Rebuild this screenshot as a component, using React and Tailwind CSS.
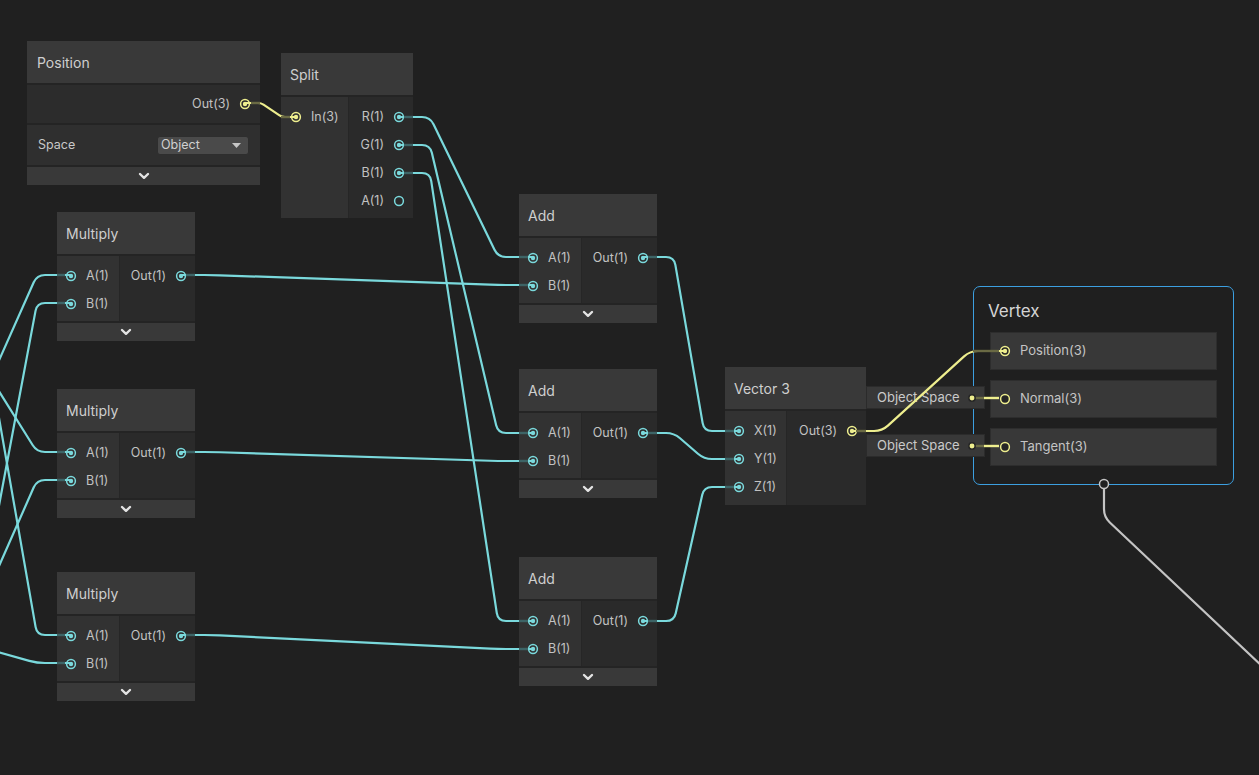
import React from "react";

const CY = "#7ad9dc";
const CY_DIM = "#3d6466";
const YE = "#eeee8e";
const YE_DIM = "#6a6a44";

// polyline with rounded corners
const rounded = (pts, r) => {
  let d = `M${pts[0][0]},${pts[0][1]}`;
  for (let i = 1; i < pts.length - 1; i++) {
    const [px, py] = pts[i - 1];
    const [cx, cy] = pts[i];
    const [nx, ny] = pts[i + 1];
    const l1 = Math.hypot(cx - px, cy - py);
    const l2 = Math.hypot(nx - cx, ny - cy);
    const r1 = Math.min(r, l1 / 2);
    const r2 = Math.min(r, l2 / 2);
    const ax = cx - ((cx - px) / l1) * r1;
    const ay = cy - ((cy - py) / l1) * r1;
    const bx = cx + ((nx - cx) / l2) * r2;
    const by = cy + ((ny - cy) / l2) * r2;
    d += ` L${ax},${ay} Q${cx},${cy} ${bx},${by}`;
  }
  const last = pts[pts.length - 1];
  return d + ` L${last[0]},${last[1]}`;
};

const edge = (o, i, oe, ie, c = "cy") => ({
  pts: [o, [o[0] + 31, o[1]], [i[0] - 35, i[1]], i],
  oe,
  ie,
  c,
});

const wires = [
  // split -> add
  edge([399, 117], [533, 257], 413, 519),
  edge([399, 145], [533, 433], 413, 519),
  edge([399, 173], [533, 621], 413, 519),
  // multiply -> add
  edge([181, 275], [533, 285], 195, 519),
  edge([181, 452], [533, 461], 195, 519),
  edge([181, 635], [533, 649], 195, 519),
  // add -> vector3
  edge([643, 257], [739, 431], 657, 725),
  edge([643, 433], [739, 459], 657, 725),
  edge([643, 621], [739, 487], 657, 725),
  // from offscreen into multiply inputs
  { pts: [[-20, 403], [37, 275], [70, 275]], ie: 57, c: "cy" },
  { pts: [[-5, 527], [37, 303], [70, 303]], ie: 57, c: "cy" },
  { pts: [[-20, 361], [37, 452], [70, 452]], ie: 57, c: "cy" },
  { pts: [[-20, 609], [37, 480], [70, 480]], ie: 57, c: "cy" },
  { pts: [[-5, 395], [37, 635], [70, 635]], ie: 57, c: "cy" },
  { pts: [[-20, 647], [37, 663], [70, 663]], ie: 57, c: "cy" },
  // yellow
  { pts: [[246, 103], [261, 103], [282, 117], [295, 117]], oe: 260, ie: 281, c: "ye", r: 3 },
  { pts: [[851, 431], [882, 431], [970, 351], [1004, 351]], oe: 866, ie: 973, c: "ye" },
];

const Port = ({ c = CY, dot = true, hollowFill = "none" }) => (
  <svg width="12" height="12" viewBox="0 0 12 12" className="shrink-0">
    <circle cx="6" cy="6" r="4.4" fill={hollowFill} stroke={c} strokeWidth="1.5" />
    {dot && <circle cx="6" cy="6" r="2.2" fill={c} />}
  </svg>
);

const Chevron = () => (
  <svg width="12" height="8" viewBox="0 0 12 8">
    <path d="M2 2 L6 5.8 L10 2" fill="none" stroke="#e4e4e4" strokeWidth="2.4" strokeLinecap="round" strokeLinejoin="round" />
  </svg>
);

const InRow = ({ label, dot = true }) => (
  <div className="h-[28px] flex items-center gap-[9px] pl-[8px]">
    <Port dot={dot} />
    <span>{label}</span>
  </div>
);

const OutRow = ({ label, dot = true, c }) => (
  <div className="h-[28px] flex items-center justify-end gap-[9px] pr-[8px]">
    <span>{label}</span>
    <Port dot={dot} c={c} />
  </div>
);

const Node = ({ pos, title, inW, bodyH, inputs, outputs, footer = true, outColor }) => (
  <div className={`absolute flex flex-col gap-[2px] bg-[#242424] ${pos}`}>
    <div className="h-[42px] bg-[#393939] flex items-center pl-[9px] text-[14px] text-[#cfcfcf]">{title}</div>
    <div className={`flex gap-px bg-[#262626] text-[12.5px] text-[#c2c2c2] ${bodyH}`}>
      <div className={`bg-[#323232] pt-[6px] ${inW}`}>
        {inputs.map((p) => (
          <InRow key={p.label} label={p.label} dot={p.dot !== false} />
        ))}
      </div>
      <div className="flex-1 bg-[#2a2a2a] pt-[6px]">
        {outputs.map((p) => (
          <OutRow key={p.label} label={p.label} dot={p.dot !== false} c={outColor} />
        ))}
      </div>
    </div>
    {footer && (
      <div className="h-[18px] bg-[#393939] flex items-center justify-center">
        <Chevron />
      </div>
    )}
  </div>
);

const ab = [{ label: "A(1)" }, { label: "B(1)" }];
const out1 = [{ label: "Out(1)" }];

const VertexRow = ({ label, dot }) => (
  <div className="h-[38px] bg-[#383838] border border-[#2d2d2d] flex items-center gap-[9px] pl-[8px] text-[13px] text-[#c4c4c4]">
    <Port c={YE} dot={dot} hollowFill="#262626" />
    <span>{label}</span>
  </div>
);

const SpaceBox = ({ pos }) => (
  <div className={`absolute h-[23px] w-[119px] bg-[#383838] border border-[#2b2b2b] flex items-center pl-[10px] text-[13px] text-[#cacaca] ${pos}`}>
    Object Space
  </div>
);

export default function App() {
  return (
    <div className="relative w-[1259px] h-[775px] overflow-hidden bg-[#202020] font-['Inter','Noto_Sans',sans-serif]">
      {/* Position */}
      <div className="absolute left-[27px] top-[41px] w-[233px] flex flex-col gap-[2px] bg-[#242424]">
        <div className="h-[42px] bg-[#393939] flex items-center pl-[10px] text-[14px] text-[#cfcfcf]">Position</div>
        <div className="h-[38px] bg-[#2c2c2c] flex items-center justify-end gap-[9px] pr-[9px] text-[12.5px] text-[#c2c2c2]">
          <span>Out(3)</span>
          <Port c={YE} />
        </div>
        <div className="h-[40px] bg-[#2f2f2f] flex items-center justify-between pl-[11px] pr-[11px] text-[12.5px] text-[#c8c8c8]">
          <span>Space</span>
          <div className="w-[92px] h-[19px] rounded-[3px] bg-[#4a4a4a] border border-[#2e2e2e] flex items-center justify-between pl-[3px] pr-[7px] text-[#d0d0d0]">
            <span>Object</span>
            <svg width="9" height="5" viewBox="0 0 9 5">
              <path d="M0 0 L9 0 L4.5 5 Z" fill="#c6c6c6" />
            </svg>
          </div>
        </div>
        <div className="h-[18px] bg-[#393939] flex items-center justify-center">
          <Chevron />
        </div>
      </div>

      {/* Split */}
      <div className="absolute left-[281px] top-[53px] w-[132px] flex flex-col gap-[2px] bg-[#242424]">
        <div className="h-[42px] bg-[#393939] flex items-center pl-[9px] text-[14px] text-[#cfcfcf]">Split</div>
        <div className="h-[121px] flex gap-px bg-[#262626] text-[12.5px] text-[#c2c2c2]">
          <div className="w-[67px] bg-[#323232] pt-[6px]">
            <div className="h-[28px] flex items-center gap-[9px] pl-[9px]">
              <Port c={YE} />
              <span>In(3)</span>
            </div>
          </div>
          <div className="flex-1 bg-[#2a2a2a] pt-[6px]">
            <OutRow label="R(1)" />
            <OutRow label="G(1)" />
            <OutRow label="B(1)" />
            <OutRow label="A(1)" dot={false} />
          </div>
        </div>
      </div>

      <Node pos="left-[57px] top-[212px] w-[138px]" title="Multiply" inW="w-[62px]" bodyH="h-[65px]" inputs={ab} outputs={out1} />
      <Node pos="left-[57px] top-[389px] w-[138px]" title="Multiply" inW="w-[62px]" bodyH="h-[65px]" inputs={ab} outputs={out1} />
      <Node pos="left-[57px] top-[572px] w-[138px]" title="Multiply" inW="w-[62px]" bodyH="h-[65px]" inputs={ab} outputs={out1} />

      <Node pos="left-[519px] top-[194px] w-[138px]" title="Add" inW="w-[62px]" bodyH="h-[65px]" inputs={ab} outputs={out1} />
      <Node pos="left-[519px] top-[369px] w-[138px]" title="Add" inW="w-[62px]" bodyH="h-[65px]" inputs={ab} outputs={out1} />
      <Node pos="left-[519px] top-[557px] w-[138px]" title="Add" inW="w-[62px]" bodyH="h-[65px]" inputs={ab} outputs={out1} />

      <Node
        pos="left-[725px] top-[367px] w-[141px]"
        title="Vector 3"
        inW="w-[61px]"
        bodyH="h-[94px]"
        inputs={[{ label: "X(1)" }, { label: "Y(1)" }, { label: "Z(1)" }]}
        outputs={[{ label: "Out(3)" }]}
        outColor={YE}
        footer={false}
      />

      {/* Vertex */}
      <div className="absolute left-[973px] top-[286px] w-[261px] h-[199px] rounded-[7px] border border-[#3c9fe0] bg-[#1f1f1f] pl-[16px] pr-[16px]">
        <div className="h-[45px] pt-[12px] text-[17px] text-[#d4d4d4] -ml-[2px]">Vertex</div>
        <div className="flex flex-col gap-[10px]">
          <VertexRow label="Position(3)" dot />
          <VertexRow label="Normal(3)" dot={false} />
          <VertexRow label="Tangent(3)" dot={false} />
        </div>
      </div>

      <SpaceBox pos="left-[866px] top-[386px]" />
      <SpaceBox pos="left-[866px] top-[434px]" />

      {/* wires */}
      <svg className="absolute inset-0 pointer-events-none" width="1259" height="775">
        {wires.map((w, k) => {
          const col = w.c === "ye" ? YE : CY;
          const dim = w.c === "ye" ? YE_DIM : CY_DIM;
          const s = w.pts[0];
          const e = w.pts[w.pts.length - 1];
          return (
            <g key={k}>
              <path d={rounded(w.pts, w.r || 8)} fill="none" stroke={col} strokeWidth="2.2" />
              {w.oe && <line x1={s[0] + 5} y1={s[1]} x2={w.oe} y2={s[1]} stroke={dim} strokeWidth="2.4" />}
              {w.ie && <line x1={w.ie} y1={e[1]} x2={e[0] - 5} y2={e[1]} stroke={dim} strokeWidth="2.4" />}
            </g>
          );
        })}
        {/* object space -> normal / tangent */}
        {[398, 446].map((y) => (
          <g key={y}>
            <line x1="975" y1={y} x2="984" y2={y} stroke={YE_DIM} strokeWidth="2.4" />
            <line x1="984" y1={y} x2="999" y2={y} stroke={YE} strokeWidth="2.4" />
            <circle cx="972" cy={y} r="3.2" fill={YE} stroke="#262626" strokeWidth="1.5" />
          </g>
        ))}
        {/* vertex bottom port */}
        <path d={rounded([[1104, 489], [1104, 517], [1300, 702]], 8)} fill="none" stroke="#c4c4c4" strokeWidth="2.2" />
        <circle cx="1104" cy="484" r="4.5" fill="#202020" stroke="#c4c4c4" strokeWidth="1.5" />
      </svg>
    </div>
  );
}
